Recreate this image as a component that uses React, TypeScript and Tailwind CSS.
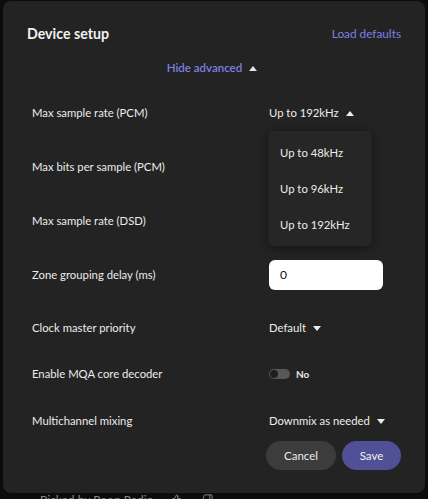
import { ThumbsUp, ThumbsDown } from "lucide-react";

const FONT = { fontFamily: "Lato, 'Noto Sans', sans-serif" };

function Caret({ up = false }: { up?: boolean }) {
  return (
    <svg width="8" height="5" viewBox="0 0 8 5" className="ml-[7px] shrink-0 fill-current">
      {up ? <path d="M0 5 L4 0 L8 5 Z" /> : <path d="M0 0 L8 0 L4 5 Z" />}
    </svg>
  );
}

function Row({ label, h, className = "", children }: { label: string; h: string; className?: string; children: React.ReactNode }) {
  return (
    <div className={`relative grid grid-cols-[237px_1fr] items-center pl-[5px] ${h} ${className}`}>
      <span className="text-[11.3px] text-[#ececec]">{label}</span>
      <div className="relative flex items-center">{children}</div>
    </div>
  );
}

const RATES = ["Up to 48kHz", "Up to 96kHz", "Up to 192kHz"];

export default function App() {
  return (
    <div style={FONT} className="h-[499px] w-[428px] overflow-hidden bg-[#0e0c0b]">
      <div className="ml-[3px] mt-px h-[492px] w-[422px] rounded-lg bg-[#232323] px-6">
        <div className="flex h-[58px] items-center justify-between pt-[8px]">
          <h1 className="text-[14.2px] font-bold text-[#f2f2f2]">Device setup</h1>
          <button className="text-[11.8px] text-[#7c80e4]">Load defaults</button>
        </div>

        <div className="flex h-[18px] items-center justify-center pr-[4px] text-[11.5px] font-semibold text-[#7c80e4]">
          Hide advanced
          <span className="text-[#e6e6e6]">
            <Caret up />
          </span>
        </div>

        <div className="mt-[9px]">
          <Row label="Max sample rate (PCM)" h="h-[54px]">
            <span className="flex items-center text-[11.3px] text-[#ececec]">
              Up to 192kHz
              <Caret up />
            </span>
            <div className="absolute left-[-1px] top-[26px] z-10 flex w-[104px] flex-col rounded-md bg-[#262626] pb-[2px] pt-[5px] shadow-[0_2px_10px_rgba(0,0,0,0.45)]">
              {RATES.map((r) => (
                <div key={r} className="flex h-[36px] items-center pl-[12px] text-[11.3px] text-[#ececec]">
                  {r}
                </div>
              ))}
            </div>
          </Row>
          <Row label="Max bits per sample (PCM)" h="h-[54px]">
            <span />
          </Row>
          <Row label="Max sample rate (DSD)" h="h-[54px]">
            <span />
          </Row>
          <Row label="Zone grouping delay (ms)" h="h-[54px]">
            <div className="flex h-[30px] w-[114px] items-center rounded-[6px] bg-white pl-[11px] text-[12px] text-[#111]">
              0
            </div>
          </Row>
          <Row label="Clock master priority" h="h-[52px]">
            <span className="flex items-center text-[11.3px] text-[#ececec]">
              Default
              <Caret />
            </span>
          </Row>
          <Row label="Enable MQA core decoder" h="h-[40px]">
            <div className="flex h-[10px] w-[21px] items-center rounded-full bg-[#575757] px-[1px]">
              <div className="h-[8px] w-[8px] rounded-full bg-[#1e1e1e]" />
            </div>
            <span className="ml-[6px] text-[10px] font-bold text-[#e6e6e6]">No</span>
          </Row>
          <Row label="Multichannel mixing" h="h-[40px]" className="mt-[7px]">
            <span className="flex items-center text-[11.3px] text-[#ececec]">
              Downmix as needed
              <Caret />
            </span>
          </Row>
        </div>

        <div className="flex justify-end gap-[6px]">
          <button className="h-[29px] w-[70px] rounded-full bg-[#3c3c3c] text-[11.5px] text-[#ececec]">Cancel</button>
          <button className="h-[29px] w-[59px] rounded-full bg-[#4f5095] text-[11.5px] text-[#f2f2f2]">Save</button>
        </div>
      </div>

      <div className="ml-[40px] mt-[1px] flex items-start text-[12px] leading-none text-[#8a8a8a]">
        <span>Picked by Roon Radio</span>
        <ThumbsUp size={11} className="ml-[17px]" />
        <ThumbsDown size={11} className="ml-[20px]" />
      </div>
    </div>
  );
}
